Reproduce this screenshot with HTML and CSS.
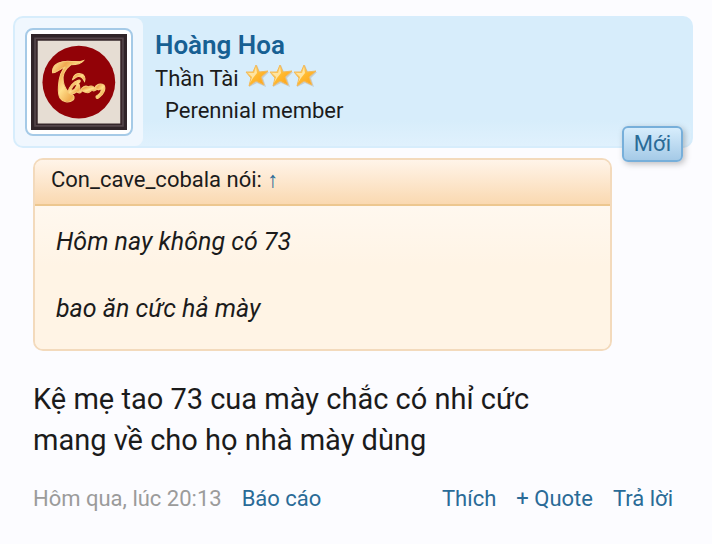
FILE: index.html
```html
<!DOCTYPE html>
<html lang="vi">
<head>
<meta charset="utf-8">
<meta name="viewport" content="width=device-width, initial-scale=1">
<title>Hoàng Hoa</title>
<link rel="stylesheet" href="styles.css">
</head>
<body>
<article class="post">
  <header class="user">
    <div class="avatar-holder">
      <a class="avatar" href="#" aria-label="Hoàng Hoa">
        <svg viewBox="3 0 285 285" aria-hidden="true">
          <defs>
            <linearGradient id="gold" x1="0" y1="0" x2="1" y2="1">
              <stop offset="0" stop-color="#fff0a8"/>
              <stop offset=".25" stop-color="#f0a850"/>
              <stop offset=".5" stop-color="#ffe08c"/>
              <stop offset=".75" stop-color="#f0ad50"/>
              <stop offset="1" stop-color="#fff1b4"/>
            </linearGradient>
          </defs>
          <path fill="#302428" d="M3 0h285v285H3z"/>
          <path fill="none" stroke="#54454a" stroke-width="5" d="M15 13h261v260H15z"/>
          <path fill="none" stroke="#3b292c" stroke-width="4" d="M20 17h251v250H20z"/>
          <path fill="#e6ddd3" d="M23 20h245v246H23z"/>
          <circle cx="145" cy="143" r="108" fill="#920207"/>
          <g fill="url(#gold)" stroke="#f8cf7c" stroke-width="3">
            <path d="M67 115C65 97 78 86 98 82C117 78 138 86 159 79C152 88 140 91 122 91C105 104 95 122 99 141C101 158 113 174 121 178C132 180 134 190 127 197C115 205 96 202 89 190C80 173 85 137 91 119C95 108 101 101 105 98C90 101 80 116 67 115Z"/>
            <path d="M126 136C128 122 139 116 150 118C161 119 166 130 162 141C158 132 151 125 143 126C135 127 133 134 126 136Z"/>
            <path fill-rule="evenodd" d="M113 171C116 157 128 142 143 137C153 135 149 144 144 147C151 153 145 166 151 168C157 173 145 178 139 172C128 181 114 178 113 171ZM123 167C131 169 139 158 138 148C130 151 123 160 123 167Z"/>
            <path d="M151 166C155 155 166 152 173 157C181 151 191 155 193 163C198 155 205 158 204 166C195 160 193 173 186 168C181 164 178 177 168 174C162 171 158 173 151 166Z"/>
            <path d="M192 160C196 149 210 145 220 152C227 164 217 181 206 188C201 195 195 191 196 185C207 180 213 170 211 163C205 167 199 165 192 160Z"/>
          </g>
        </svg>
      </a>
    </div>
    <div class="user-info">
      <h3 class="name"><a href="#">Hoàng Hoa</a></h3>
      <div class="title">Thần Tài
        <svg class="stars" viewBox="0 0 72 26" role="img" aria-label="3 sao">
          <defs>
            <linearGradient id="star" x1="0" y1="0" x2="1" y2="1">
              <stop offset="0" stop-color="#ffe49a"/>
              <stop offset=".5" stop-color="#ffb92f"/>
              <stop offset="1" stop-color="#ff9c12"/>
            </linearGradient>
            <g id="one-star">
              <path fill="#c5ced0" d="M12 2 15 9 24 9 18 15 21 24 12 20 4 24 6 15 1 9 9 9Z"/>
              <path fill="url(#star)" stroke="#f2ba5c" d="M11 2 14 9 23 8 16 14 19 22 11 18 4 23 6 15 1 9 8 9Z"/>
              <path fill="#ffe4a0" d="M11 4 12 10 8 15 5 20 7 14 3 10 9 10Z"/>
            </g>
          </defs>
          <use href="#one-star"/>
          <use href="#one-star" x="24"/>
          <use href="#one-star" x="48"/>
        </svg>
      </div>
      <div class="rank">Perennial member</div>
    </div>
    <strong class="badge">Mới</strong>
  </header>
  <div class="content">
    <blockquote class="quote">
      <div class="attribution">Con_cave_cobala nói: <a href="#">↑</a></div>
      <div class="quoted">
        <p>Hôm nay không có 73</p>
        <p>bao ăn cức hả mày</p>
      </div>
    </blockquote>
    <p class="message">Kệ mẹ tao 73 cua mày chắc có nhỉ cức mang về cho họ nhà mày dùng</p>
  </div>
  <footer class="meta">
    <time>Hôm qua, lúc 20:13</time>
    <a href="#">Báo cáo</a>
    <nav class="actions">
      <a href="#">Thích</a>
      <a href="#">+ Quote</a>
      <a href="#">Trả lời</a>
    </nav>
  </footer>
</article>
</body>
</html>
```
FILE: styles.css
```css
* { box-sizing: border-box; }
body {
  margin: 0;
  background: #fcfcff;
  color: #1b1b1b;
  font: 22px/32px Roboto, "Liberation Sans", sans-serif;
}
h3, p, blockquote { margin: 0; }
a { color: #2a6b97; text-decoration: none; }
.post { padding: 16px 19px 16px 13px; }
.user {
  position: relative;
  display: flex;
  gap: 12px;
  border: 2px solid #d7edfc;
  border-radius: 10px;
  background: linear-gradient(#d7edfb 80%, #e0f1fd);
}
.avatar-holder {
  padding: 10px;
  border-radius: 8px;
  background: #f0f7fe;
}
.avatar {
  display: block;
  width: 108px;
  padding: 4px;
  border: 2px solid #a5cae7;
  border-radius: 8px;
  background: #fff;
}
.avatar svg { display: block; }
.user-info { padding-top: 10px; }
.name { font-size: 26px; line-height: 35px; font-weight: 600; }
.name a { color: #176093; }
.title { display: flex; align-items: center; gap: 6px; }
.stars { width: 72px; height: 26px; margin-bottom: 6px; }
.rank { padding-left: 10px; }
.badge {
  position: absolute;
  right: 8px;
  bottom: -16px;
  padding: 0 10px;
  border: 2px solid #77afda;
  border-radius: 6px;
  background: linear-gradient(#d7edfc, #a5cae7);
  box-shadow: 2px 2px 6px rgba(0, 0, 0, .25);
  color: #2a6b97;
  font-weight: 400;
}
.content { padding: 10px 81px 0 20px; }
.quote {
  border: 2px solid #f3dabc;
  border-radius: 10px;
  background: #fff4e5;
  overflow: hidden;
}
.attribution {
  padding: 4px 16px 8px;
  border-bottom: 2px solid #edc78f;
  background: linear-gradient(#fff4e9, #fad9b1);
}
.quoted {
  display: grid;
  gap: 35px;
  padding: 20px 21px 24px;
  background: linear-gradient(#fff8ef, #fff4e5 60px);
  font-size: 25px;
  font-style: italic;
}
.message {
  margin-top: 28px;
  padding-right: 20px;
  font-size: 29px;
  line-height: 41px;
}
.meta {
  display: flex;
  gap: 20px;
  padding: 22px 20px 0;
  color: #9b9b9b;
}
.actions { display: flex; gap: 20px; margin-left: auto; }
```
